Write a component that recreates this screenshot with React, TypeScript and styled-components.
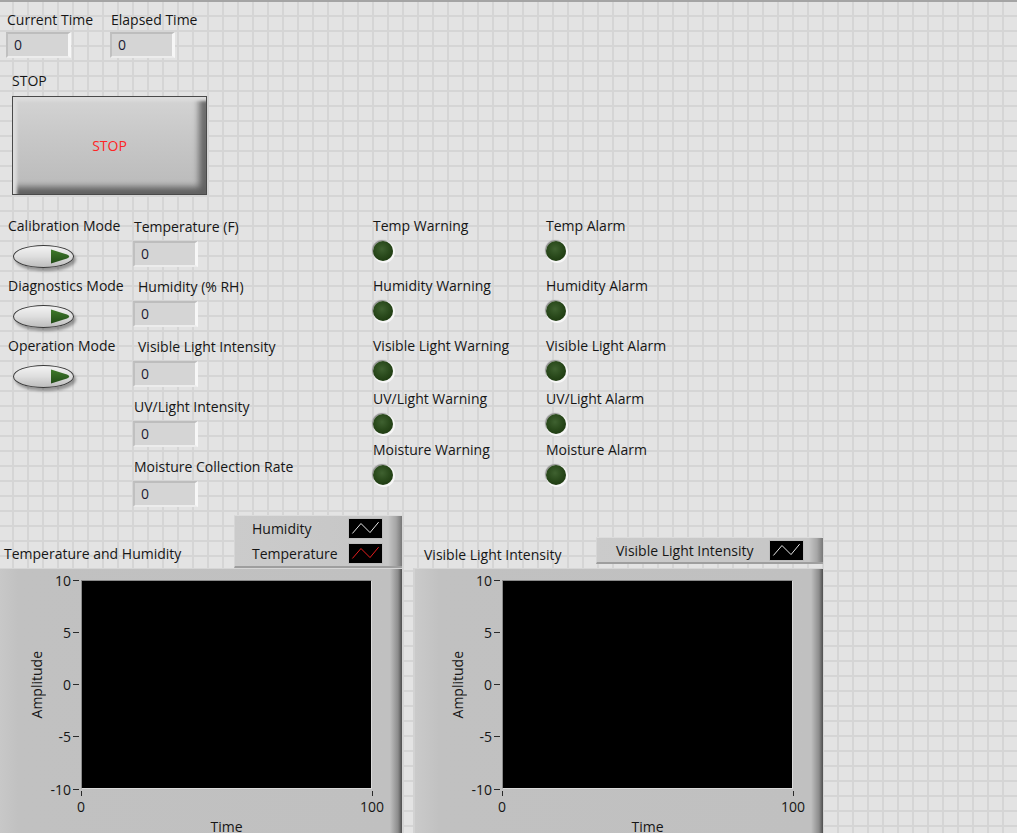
import React from "react";
import styled, { createGlobalStyle } from "styled-components";

const GlobalStyle = createGlobalStyle`
  html, body { margin: 0; padding: 0; background: #e3e3e3; }
  body { overflow: hidden; }
`;

const Panel = styled.div`
  position: relative;
  width: 1017px;
  height: 833px;
  overflow: hidden;
  box-sizing: border-box;
  border-top: 2px solid #a4a4a4;
  background-color: #e3e3e3;
  background-image:
    linear-gradient(to right, #d5d5d5 2px, transparent 2px),
    linear-gradient(to bottom, #d5d5d5 2px, transparent 2px);
  background-size: 15px 15px;
  background-position: 12px 13px;
  font-family: "Segoe UI", "Open Sans", "Noto Sans", sans-serif;
  font-size: 14px;
  color: #161616;
`;

const Label = styled.div<{ $indent?: number }>`
  height: 15px;
  line-height: 15px;
  white-space: nowrap;
  padding-left: ${(p) => p.$indent ?? 0}px;
`;

/* ---------- numeric indicators ---------- */
const Numeric = styled.div<{ $gap: number }>`
  display: flex;
  flex-direction: column;
  gap: ${(p) => p.$gap}px;
`;

const NumBox = styled.div`
  box-sizing: border-box;
  width: 65px;
  height: 26px;
  background: #d5d5d5;
  border-style: solid;
  border-width: 2px 3px 2px 2px;
  border-color: #bdbdbd #f6f6f6 #ececec #c0c0c0;
  padding-left: 6px;
  line-height: 22px;
  color: #1c1c34;
`;

const TopRow = styled.div`
  display: grid;
  grid-template-columns: 104px auto;
  justify-content: start;
  padding: 10px 0 0 6px;
`;

/* ---------- stop button ---------- */
const StopSection = styled.div`
  display: flex;
  flex-direction: column;
  gap: 8px;
  margin-top: 15px;
  padding-left: 12px;
`;

const StopButton = styled.button`
  width: 195px;
  height: 99px;
  box-sizing: border-box;
  border: 1px solid #4a4a4a;
  background: linear-gradient(to bottom, #d4d4d4 0%, #c8c8c8 40%, #bdbdbd 85%, #b3b3b3 100%);
  box-shadow: inset 4px 4px 3px #dcdcdc, inset -7px -7px 6px rgba(40, 40, 40, 0.6);
  color: #ff2424;
  font: inherit;
  padding: 0;
`;

/* ---------- middle area ---------- */
const MiddleRow = styled.div`
  display: flex;
  align-items: flex-start;
  margin-top: 23px;
  padding-left: 8px;
`;

const Column = styled.div<{ $width: number; $top?: number; $gap?: number }>`
  display: flex;
  flex-direction: column;
  width: ${(p) => p.$width}px;
  padding-top: ${(p) => p.$top ?? 0}px;
  gap: ${(p) => p.$gap ?? 0}px;
`;

const SwitchItem = styled.div`
  display: flex;
  flex-direction: column;
  gap: 12px;
`;

const Switch = styled.div`
  position: relative;
  box-sizing: border-box;
  width: 61px;
  height: 23px;
  margin-left: 5px;
  border: 1px solid #3a3a3a;
  border-radius: 50%;
  background: linear-gradient(to bottom, #f3f3f3 0%, #dedede 50%, #bdbdbd 100%);
  box-shadow: 2px 3px 3px rgba(0, 0, 0, 0.35);
`;

const SwitchArrow = styled.svg`
  position: absolute;
  right: 1px;
  top: 3px;
`;

const LedItem = styled.div<{ $mt: number }>`
  display: flex;
  flex-direction: column;
  gap: 8px;
  margin-top: ${(p) => p.$mt}px;
`;

const Led = styled.div`
  width: 20px;
  height: 20px;
  margin-left: 1px;
  border-radius: 50%;
  background: radial-gradient(circle at 45% 40%, #3f6130 0%, #2a4a1c 45%, #163009 100%);
  box-shadow: 1px 1px 0 1px #f6f6f6, -1px -1px 1px 0 #8c8c8c;
`;

/* ---------- graphs ---------- */
const GraphsRow = styled.div`
  display: flex;
  gap: 11px;
  margin-top: 8px;
  margin-left: -8px;
`;

const Graph = styled.div`
  display: flex;
  flex-direction: column;
  width: 410px;
`;

const GraphHeader = styled.div`
  display: flex;
  align-items: flex-end;
  justify-content: space-between;
  height: 53px;
`;

const GraphTitle = styled.div<{ $pl: number; $pb: number }>`
  line-height: 15px;
  white-space: nowrap;
  padding-left: ${(p) => p.$pl}px;
  padding-bottom: ${(p) => p.$pb}px;
`;

const Legend = styled.div<{ $width: number; $height: number; $mb: number }>`
  box-sizing: border-box;
  width: ${(p) => p.$width}px;
  height: ${(p) => p.$height}px;
  margin-bottom: ${(p) => p.$mb}px;
  align-self: flex-end;
  display: flex;
  flex-direction: column;
  border-top: 1px solid #dcdcdc;
  border-left: 1px solid #d6d6d6;
  border-bottom: 2px solid #9e9e9e;
  background: linear-gradient(
    to right,
    #cbcbcb 0,
    #c6c6c6 calc(100% - 14px),
    #a6a6a6 calc(100% - 6px),
    #777 100%
  );
`;

const LegendRow = styled.div<{ $pl: number }>`
  flex: 1;
  display: flex;
  align-items: center;
  justify-content: space-between;
  padding: 0 19px 0 ${(p) => p.$pl}px;
  white-space: nowrap;
`;

const Swatch = styled.svg`
  display: block;
  background: #000;
  box-sizing: border-box;
  border: 1px solid #bdbdbd;
`;

const Frame = styled.div`
  box-sizing: border-box;
  width: 410px;
  height: 285px;
  padding: 11px 0 0 28px;
  border-top: 1px solid #d6d6d6;
  border-left: 2px solid #d2d2d2;
  background: linear-gradient(
    to right,
    #cacaca 0,
    #c1c1c1 24px,
    #c0c0c0 calc(100% - 12px),
    #8c8c8c calc(100% - 4px),
    #4e4e4e 100%
  );
  display: grid;
  grid-template-columns: 28px 31px 291px;
  grid-template-rows: 209px auto auto;
  align-content: start;
`;

const AxisTitleY = styled.div`
  grid-row: 1;
  grid-column: 1;
  align-self: center;
  justify-self: center;
  writing-mode: vertical-rl;
  transform: rotate(180deg);
  line-height: 15px;
  white-space: nowrap;
`;

const YAxis = styled.div`
  grid-row: 1;
  grid-column: 2;
  display: flex;
  flex-direction: column;
  justify-content: space-between;
`;

const YTick = styled.div`
  height: 0;
  display: flex;
  align-items: center;
  justify-content: flex-end;
  gap: 2px;
  padding-right: 2px;
  line-height: 15px;
`;

const TickH = styled.span`
  width: 6px;
  height: 1px;
  background: #2a2a2a;
  flex: none;
`;

const Plot = styled.div`
  grid-row: 1;
  grid-column: 3;
  box-sizing: border-box;
  background: #000;
  border: 1px solid;
  border-color: #8a8a8a #dadada #dadada #8a8a8a;
`;

const XAxis = styled.div`
  grid-row: 2;
  grid-column: 3;
  display: flex;
  justify-content: space-between;
  padding-top: 2px;
`;

const XTick = styled.div`
  width: 0;
  display: flex;
  flex-direction: column;
  align-items: center;
  gap: 3px;
`;

const TickV = styled.span`
  width: 1px;
  height: 5px;
  background: #2a2a2a;
  flex: none;
`;

const XLabel = styled.span`
  line-height: 15px;
  white-space: nowrap;
`;

const AxisTitleX = styled.div`
  grid-row: 3;
  grid-column: 3;
  text-align: center;
  margin-top: 5px;
  line-height: 15px;
`;

/* ---------- pieces ---------- */
const NumericIndicator = ({ label, indent, gap }: { label: string; indent: number; gap: number }) => (
  <Numeric $gap={gap}>
    <Label $indent={indent}>{label}</Label>
    <NumBox>0</NumBox>
  </Numeric>
);

const ModeSwitch = ({ label }: { label: string }) => (
  <SwitchItem>
    <Label>{label}</Label>
    <Switch>
      <SwitchArrow width="22" height="15" viewBox="0 0 22 15">
        <defs>
          <linearGradient id="arrowGrad" x1="0" y1="0" x2="0" y2="1">
            <stop offset="0" stopColor="#407a2c" />
            <stop offset="1" stopColor="#224c18" />
          </linearGradient>
        </defs>
        <path d="M1 0.5 L17 5.5 Q21.5 7.5 17 9.5 L1 14.5 Z" fill="url(#arrowGrad)" />
      </SwitchArrow>
    </Switch>
  </SwitchItem>
);

const Indicator = ({ label, mt }: { label: string; mt: number }) => (
  <LedItem $mt={mt}>
    <Label $indent={1}>{label}</Label>
    <Led />
  </LedItem>
);

const Wave = ({ color }: { color: string }) => (
  <Swatch width="35" height="21" viewBox="0 0 35 21">
    <polyline points="3,16 12.5,5 22.5,15 32,3.5" fill="none" stroke={color} strokeWidth="1" />
  </Swatch>
);

const Chart = () => (
  <Frame>
    <AxisTitleY>Amplitude</AxisTitleY>
    <YAxis>
      {["10", "5", "0", "-5", "-10"].map((v) => (
        <YTick key={v}>
          <span>{v}</span>
          <TickH />
        </YTick>
      ))}
    </YAxis>
    <Plot />
    <XAxis>
      {["0", "100"].map((v) => (
        <XTick key={v}>
          <TickV />
          <XLabel>{v}</XLabel>
        </XTick>
      ))}
    </XAxis>
    <AxisTitleX>Time</AxisTitleX>
  </Frame>
);

const numerics = [
  { label: "Temperature (F)", indent: 1 },
  { label: "Humidity (% RH)", indent: 5 },
  { label: "Visible Light Intensity", indent: 5 },
  { label: "UV/Light Intensity", indent: 1 },
  { label: "Moisture Collection Rate", indent: 1 },
];

const ledGaps = [0, 17, 17, 10, 8];
const warnings = ["Temp Warning", "Humidity Warning", "Visible Light Warning", "UV/Light Warning", "Moisture Warning"];
const alarms = ["Temp Alarm", "Humidity Alarm", "Visible Light Alarm", "UV/Light Alarm", "Moisture Alarm"];

export default function App() {
  return (
    <>
      <GlobalStyle />
      <Panel>
        <TopRow>
          <NumericIndicator label="Current Time" indent={1} gap={5} />
          <NumericIndicator label="Elapsed Time" indent={1} gap={5} />
        </TopRow>

        <StopSection>
          <Label>STOP</Label>
          <StopButton>STOP</StopButton>
        </StopSection>

        <MiddleRow>
          <Column $width={125} $gap={10}>
            <ModeSwitch label="Calibration Mode" />
            <ModeSwitch label="Diagnostics Mode" />
            <ModeSwitch label="Operation Mode" />
          </Column>
          <Column $width={239} $top={1} $gap={12}>
            {numerics.map((n) => (
              <NumericIndicator key={n.label} label={n.label} indent={n.indent} gap={7} />
            ))}
          </Column>
          <Column $width={173}>
            {warnings.map((w, i) => (
              <Indicator key={w} label={w} mt={ledGaps[i]} />
            ))}
          </Column>
          <Column $width={173}>
            {alarms.map((a, i) => (
              <Indicator key={a} label={a} mt={ledGaps[i]} />
            ))}
          </Column>
        </MiddleRow>

        <GraphsRow>
          <Graph>
            <GraphHeader>
              <GraphTitle $pl={12} $pb={7}>Temperature and Humidity</GraphTitle>
              <Legend $width={168} $height={53} $mb={0}>
                <LegendRow $pl={17}>
                  <span>Humidity</span>
                  <Wave color="#ffffff" />
                </LegendRow>
                <LegendRow $pl={17}>
                  <span>Temperature</span>
                  <Wave color="#ff2020" />
                </LegendRow>
              </Legend>
            </GraphHeader>
            <Chart />
          </Graph>
          <Graph>
            <GraphHeader>
              <GraphTitle $pl={11} $pb={6}>Visible Light Intensity</GraphTitle>
              <Legend $width={227} $height={27} $mb={4}>
                <LegendRow $pl={19}>
                  <span>Visible Light Intensity</span>
                  <Wave color="#ffffff" />
                </LegendRow>
              </Legend>
            </GraphHeader>
            <Chart />
          </Graph>
        </GraphsRow>
      </Panel>
    </>
  );
}
